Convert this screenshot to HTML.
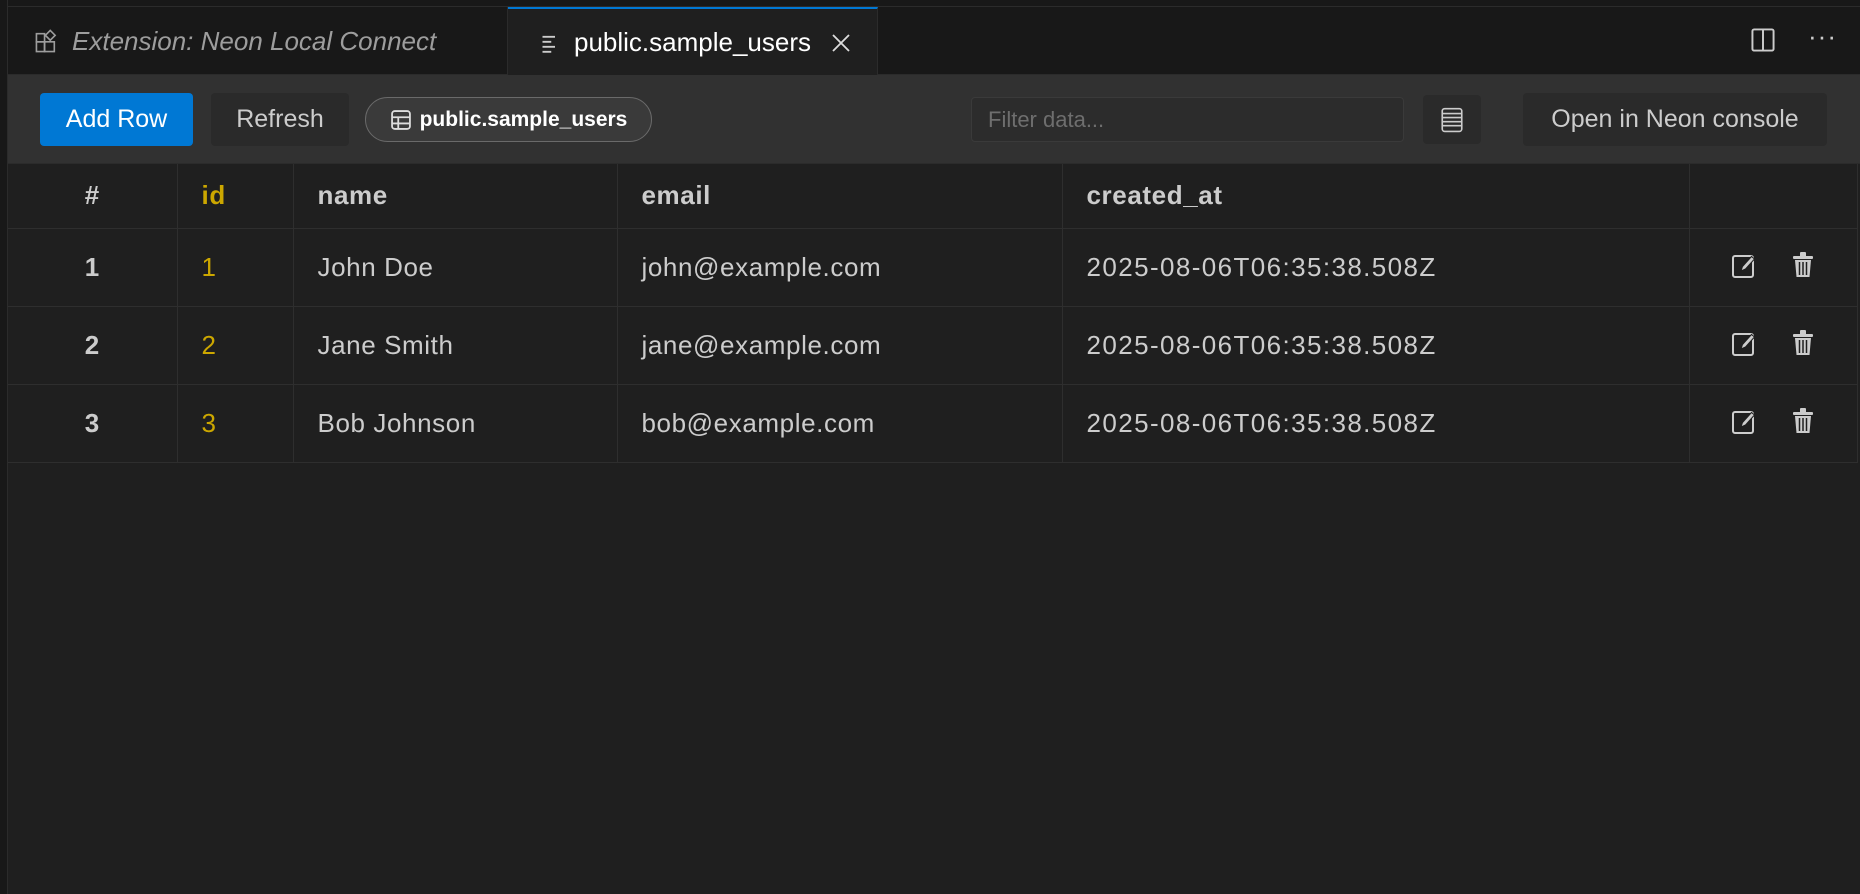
<!DOCTYPE html>
<html><head><meta charset="utf-8"><style>
*{box-sizing:border-box;margin:0;padding:0}
body{width:1860px;height:894px;background:#1f1f1f;font-family:"Liberation Sans",sans-serif;color:#cccccc;position:relative;overflow:hidden}
.abs{position:absolute}
#top{left:0;top:0;width:1860px;height:7px;background:#181818;border-bottom:1px solid #2b2b2b}
#left{left:0;top:0;width:8px;height:894px;background:#181818;border-right:1px solid #2b2b2b}
#tabs{left:8px;top:7px;width:1852px;height:68px;background:#181818;border-bottom:1px solid #2b2b2b}
.tab{position:absolute;top:0;height:68px;display:flex;align-items:center;font-size:26px}
#tab1{left:0;width:500px;padding-left:26px;color:#9d9d9d;font-style:italic;border-right:1px solid #2b2b2b}
#tab2{left:500px;width:370px;background:#1f1f1f;border-top:2px solid #0078d4;border-right:1px solid #2b2b2b;color:#ffffff;padding-left:32px;height:69px}
#toolbar{left:8px;top:75px;width:1852px;height:89px;background:#313131;border-bottom:1px solid #2b2b2b}
.btn{position:absolute;display:flex;align-items:center;justify-content:center;font-size:25px;border-radius:4px}
td,th{border-right:1px solid #2e2e2e;border-bottom:1px solid #2e2e2e;text-align:left;padding-left:24px}
td{font-size:26px;letter-spacing:0.6px;height:78px}
td.d{letter-spacing:1.4px}
th{height:64px;font-weight:bold;font-size:26px;letter-spacing:0.6px}
table{border-collapse:collapse;position:absolute;left:8px;top:164px;width:1850px}
.c{text-align:center;padding-left:0;font-weight:bold}
.y{color:#cca700}
</style></head><body>
<div class="abs" id="top"></div>
<div class="abs" id="left"></div>
<div class="abs" id="tabs">
 <div class="tab" id="tab1"><svg width="26" height="26" viewBox="0 0 16 16" style="margin-right:12px" fill="none" stroke="#9d9d9d" stroke-width="1"><rect x="1.5" y="3.5" width="5" height="5"/><rect x="1.5" y="8.5" width="5" height="6"/><rect x="6.5" y="8.5" width="6" height="6"/><path d="M10 1.5l3 3-3 3-3-3z"/></svg>Extension: Neon Local Connect</div>
 <div class="tab" id="tab2"><svg width="20" height="20" viewBox="0 0 16 16" style="margin-right:14px" stroke="#ccc" stroke-width="1.5"><path d="M2 3h10M2 7h7M2 11h10M2 15h7"/></svg>public.sample_users<svg width="20" height="20" viewBox="0 0 20 20" style="margin-left:20px" stroke="#ddd" stroke-width="1.8"><path d="M2 2l16 16M18 2L2 18"/></svg></div>
 <svg class="abs" style="left:1742px;top:20px" width="26" height="26" viewBox="0 0 16 16" fill="none" stroke="#ccc" stroke-width="1.2"><rect x="1.5" y="1.5" width="13" height="13" rx="1"/><path d="M8 1.5v13"/></svg>
 <div class="abs" style="left:1800px;top:14px;font-size:26px;color:#ccc;letter-spacing:1px">···</div>
</div>
<div class="abs" id="toolbar">
 <div class="btn" style="left:32px;top:18px;width:153px;height:53px;background:#0078d4;color:#fff">Add Row</div>
 <div class="btn" style="left:203px;top:18px;width:138px;height:53px;background:#2a2a2a;color:#ccc">Refresh</div>
 <div class="btn" style="left:357px;top:22px;width:287px;height:45px;background:#3a3a3a;border:1.5px solid #6a6a6a;border-radius:23px;color:#fff;font-weight:bold;font-size:21px"><svg width="22" height="22" viewBox="0 0 16 16" fill="none" stroke="#ddd" stroke-width="1.3" style="margin-right:8px"><rect x="1.5" y="1.5" width="13" height="13" rx="2"/><path d="M1.5 6h13M1.5 10.5h13M6 6v8.5"/></svg>public.sample_users</div>
 <div class="btn" style="left:963px;top:22px;width:433px;height:45px;background:#2c2c2c;border:1px solid #3a3a3a;color:#6e6e6e;justify-content:flex-start;padding-left:16px;font-size:22px">Filter data...</div>
 <div class="btn" style="left:1415px;top:20px;width:58px;height:49px;background:#2a2a2a"><svg width="26" height="28" viewBox="0 0 16 17" fill="none" stroke="#ccc" stroke-width="1"><rect x="2" y="1.5" width="12" height="14" rx="1.5"/><path d="M2 4.5h12M2 7h12M2 9.5h12M2 12h12"/></svg></div>
 <div class="btn" style="left:1515px;top:18px;width:304px;height:53px;background:#2a2a2a;color:#ccc">Open in Neon console</div>
</div>
<table>
<tr><th class="c" style="width:169px">#</th><th class="y" style="width:116px">id</th><th style="width:324px">name</th><th style="width:445px">email</th><th style="width:627px">created_at</th><th></th></tr>
<tr><td class="c">1</td><td class="y">1</td><td>John Doe</td><td>john@example.com</td><td class="d">2025-08-06T06:35:38.508Z</td><td></td></tr>
<tr><td class="c">2</td><td class="y">2</td><td>Jane Smith</td><td>jane@example.com</td><td class="d">2025-08-06T06:35:38.508Z</td><td></td></tr>
<tr><td class="c">3</td><td class="y">3</td><td>Bob Johnson</td><td>bob@example.com</td><td class="d">2025-08-06T06:35:38.508Z</td><td></td></tr>
</table>
<svg class="abs" style="left:0;top:0" width="1860" height="894">
<defs>
<g id="ed" fill="none" stroke="#ccc" stroke-width="2"><rect x="3" y="4" width="20" height="21" rx="2"/><path d="M11 19l1.5-4.5 9-10 3 2.5-9 10z" fill="#ccc" stroke="#1f1f1f" stroke-width="1"/></g>
<g id="tr" fill="#ccc"><rect x="1" y="4" width="20" height="3" rx="1"/><rect x="8" y="0" width="6" height="5" rx="1"/><path d="M3 8h16l-1.5 17h-13z"/><path d="M7.5 10v13M11 10v13M14.5 10v13" stroke="#1f1f1f" stroke-width="1.5"/></g>
</defs>
<use href="#ed" x="1730" y="252"/><use href="#tr" x="1792" y="252"/>
<use href="#ed" x="1730" y="330"/><use href="#tr" x="1792" y="330"/>
<use href="#ed" x="1730" y="408"/><use href="#tr" x="1792" y="408"/>
</svg>
</body></html>
